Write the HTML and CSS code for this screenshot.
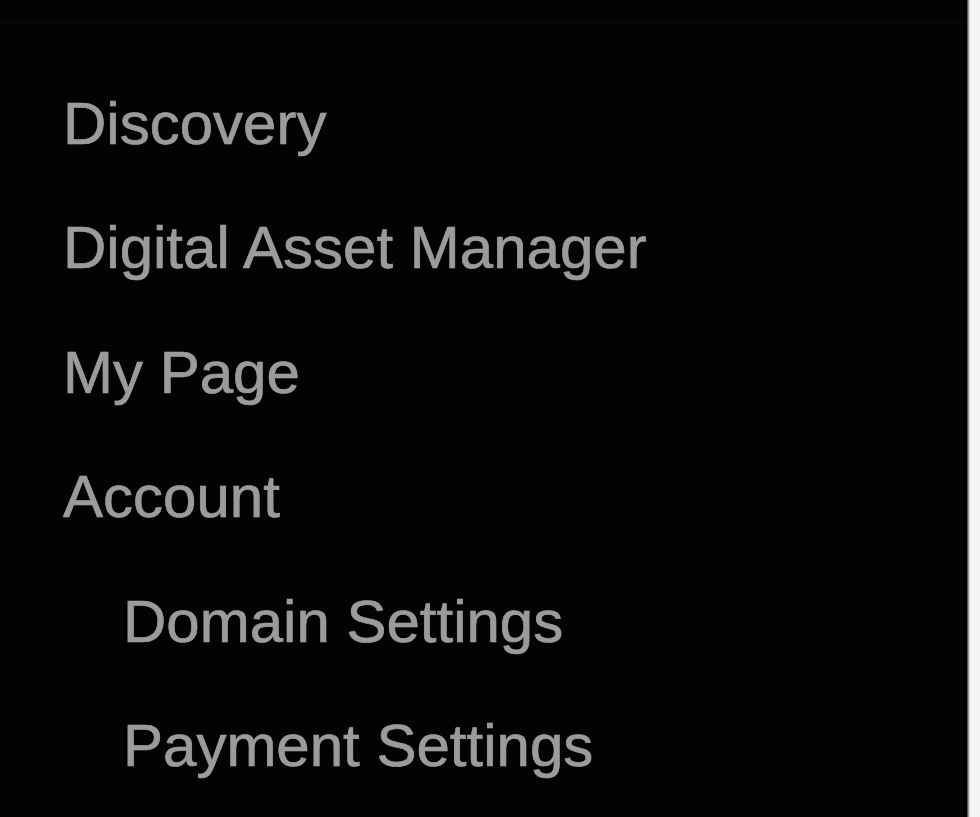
FILE: index.html
```html
<!DOCTYPE html>
<html lang="en">
<head>
<meta charset="utf-8">
<title>Menu</title>
<link rel="stylesheet" href="styles.css">
</head>
<body>
<div class="layout">
  <nav class="panel">
    <div class="topline"></div>
    <ul class="menu">
      <li class="item">Discovery</li>
      <li class="item">Digital Asset Manager</li>
      <li class="item">My Page</li>
      <li class="item">Account</li>
      <li class="item sub">Domain Settings</li>
      <li class="item sub">Payment Settings</li>
    </ul>
  </nav>
  <div class="edge"></div>
</div>
</body>
</html>
```

FILE: styles.css
```css
html, body {
  margin: 0;
  padding: 0;
  height: 100%;
  background: #f5f5f5;
}
.layout {
  display: flex;
  height: 817px;
  overflow: hidden;
}
.panel {
  width: 967px;
  background: #030303;
  border-right: 1px solid #555;
  box-shadow: 1px 0 0 #999, 2px 0 0 #ddd;
}
.topline {
  height: 22px;
  border-bottom: 1px solid #0b0b0b;
}
.menu {
  list-style: none;
  margin: 0;
  padding: 39px 0 0 63px;
}
.item {
  font-family: "Liberation Sans", Arial, sans-serif;
  font-size: 60px;
  line-height: 124.4px;
  color: #9b9b9b;
  white-space: nowrap;
  -webkit-text-stroke: 0.6px #9b9b9b;
  text-shadow: 0 0 1px rgba(155, 155, 155, 0.6);
}
.sub {
  padding-left: 60px;
}
.edge {
  flex: 1;
}
```
